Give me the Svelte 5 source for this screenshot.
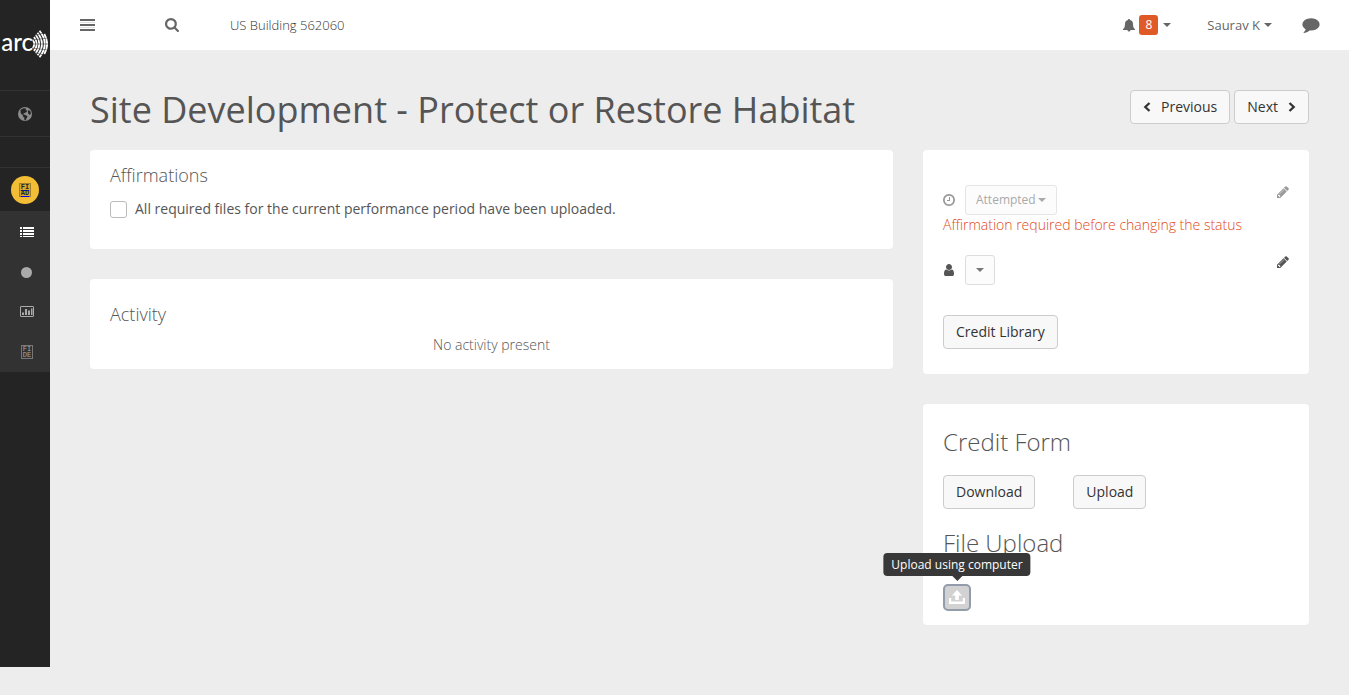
<script>
  const title = 'Site Development - Protect or Restore Habitat';
  let affirmed = $state(false);
</script>

{#snippet caret()}
  <svg class="caret" viewBox="0 0 8 4" aria-hidden="true"><path d="M0 0h8L4 4z" /></svg>
{/snippet}

{#snippet pencil()}
  <svg class="i14" viewBox="0 0 1792 1792" aria-hidden="true"><path d="M491 1536l91-91-235-235-91 91v107h128v128h107zm523-928q0-22-22-22-10 0-17 7l-542 542q-7 7-7 17 0 22 22 22 10 0 17-7l542-542q7-7 7-17zm-54-192l416 416-832 832h-416v-416zm683 96q0 53-37 90l-166 166-416-416 166-165q36-38 90-38 53 0 91 38l235 234q37 39 37 91z" /></svg>
{/snippet}

<div class="app">
  <nav class="sidebar" aria-label="Main">
    <a class="logo" href="#home" aria-label="arc">
      <span>arc</span>
      <svg viewBox="0 0 16 28" aria-hidden="true">
        <g fill="none" stroke="#fff" stroke-width="1.8">
          <path d="M0.500 9.500Q4 14 0.500 18.500" />
          <path d="M2 7Q7.500 14 2 21" />
          <path d="M3.700 4.700Q11 14 3.700 23.300" />
          <path d="M5.500 2.700Q14.400 14 5.500 25.300" />
          <path d="M7.500 0.800Q18 14 7.500 27.200" />
          <path d="M12.300 4Q18 14 12.300 24" />
        </g>
        <path d="M0 6l16-4M0 10l16-2M0 14h16M0 18l16 2M0 22l16 4" stroke="#242424" stroke-width=".5" />
      </svg>
    </a>
    <a class="item globe" href="#world" aria-label="Portfolio">
      <svg viewBox="0 0 14 14" aria-hidden="true">
        <circle cx="7" cy="7" r="7" fill="#8d8d8d" />
        <path d="M2.500 2.800L5.500 1.200 8.200 1.600 7.600 3.200 9.300 3.400 8.600 5 6.600 6 5.200 6.700 5.800 7.600 8 8.200 9.600 9.600 8.700 11 7.500 13.400 6.400 13 6.300 10.700 4.800 9.200 5.100 8 3.500 7.200 2.600 5.400zM10.500 3l1.700 1 .8 2.500-1.200 1.500-1.600-1.400-.3-2z" fill="#242424" />
      </svg>
    </a>
    <div class="blank"></div>
    <a class="item project" href="#project" aria-label="Project"><span class="badge"><span class="code"><span>FI</span><span>AD</span></span></span></a>
    <div class="sub">
      <a href="#credits" aria-label="Credits">
        <svg class="i14" viewBox="0 0 14 14" fill="#fff" aria-hidden="true"><path d="M0 2h2v2H0zM3 2h11v2H3zM0 5h2v2H0zM3 5h11v2H3zM0 8h2v2H0zM3 8h11v2H3zM0 11h2v1H0zM3 11h11v1H3z" fill="#fff" /></svg>
      </a>
      <a href="#status" aria-label="Status"><svg class="i12" viewBox="0 0 12 12" aria-hidden="true"><circle cx="5.500" cy="6" r="5.500" fill="#aaa" /></svg></a>
      <a href="#charts" aria-label="Charts">
        <svg class="i14" viewBox="0 0 14 14" aria-hidden="true"><rect x=".5" y="1.500" width="13" height="10" rx=".5" fill="none" stroke="#aaa" /><path d="M2 7.500h2V10H2zM5 4h2v6H5zM8 5.500h2V10H8zM11 3.500h1.500V10H11z" fill="#aaa" /></svg>
      </a>
      <a href="#manage" aria-label="Manage"><span class="code"><span>FI</span><span>DE</span></span></a>
    </div>
  </nav>

  <div class="page">
    <header>
      <button class="plain menu" aria-label="Toggle menu">
        <svg viewBox="0 0 15 12" aria-hidden="true"><path d="M0 0h15v2H0zM0 5h15v2H0zM0 10h15v2H0z" /><path d="M0 3h15v1H0zM0 8h15v1H0z" opacity=".2" /></svg>
      </button>
      <button class="plain search" aria-label="Search">
        <svg class="i14" viewBox="64 128 1664 1664" aria-hidden="true"><path d="M1216 832q0-185-131.500-316.500t-316.500-131.500-316.500 131.500-131.500 316.500 131.500 316.500 316.500 131.500 316.500-131.500 131.500-316.500zm512 832q0 52-38 90t-90 38q-54 0-90-38l-343-342q-179 124-399 124-143 0-273.500-55.500t-225-150-150-225-55.500-273.500 55.500-273.500 150-225 225-150 273.500-55.500 273.500 55.500 225 150 150 225 55.500 273.500q0 220-124 399l343 343q37 37 37 90z" /></svg>
      </button>
      <span class="building">US Building 562060</span>
      <button class="plain alerts" aria-label="8 notifications">
        <svg class="i12" viewBox="0 0 12 13" aria-hidden="true"><path d="M6 0c.6 0 1 .4 1 1 1.900.4 3 1.900 3 3.900 0 2.700.6 4.100 2 5.300v.8H7.500a1.500 1.500 0 0 1-3 0H0v-.8c1.400-1.200 2-2.600 2-5.300C2 2.900 3.100 1.400 5 1c0-.6.4-1 1-1z" /></svg>
        <span class="count">8</span>
        {@render caret()}
      </button>
      <button class="plain account">Saurav K {@render caret()}</button>
      <button class="plain" aria-label="Feedback">
        <svg class="chat" viewBox="0 128 1792 1664" aria-hidden="true"><path d="M1792 896q0 174-120 321.500t-326 233-450 85.500q-70 0-145-8-198 175-460 242-49 14-114 22-17 2-30.500-9t-17.500-29v-1q-3-4-.5-12t2-10 4.500-9.500l6-9 7-8.500 8-9q7-8 31-34.500t34.500-38 31-39.500 32.500-51 27-59 26-76q-157-89-247.500-220t-90.500-281q0-130 71-248.500t191-204.500 286-136.500 348-50.500q244 0 450 85.500t326 233 120 321.500z" /></svg>
      </button>
    </header>

    <main>
      <div class="titlebar">
        <h1>{title}</h1>
        <div class="pager">
          <button class="btn"><svg class="chev" viewBox="0 0 8 10" aria-hidden="true"><path d="M6.500 1L2.300 5l4.200 4" /></svg>Previous</button>
          <button class="btn">Next<svg class="chev" viewBox="0 0 8 10" aria-hidden="true"><path d="M1.500 1l4.200 4-4.200 4" /></svg></button>
        </div>
      </div>

      <div class="columns">
        <div class="stack">
          <section class="card affirm">
            <h3>Affirmations</h3>
            <label class="check">
              <input type="checkbox" bind:checked={affirmed} />
              All required files for the current performance period have been uploaded.
            </label>
          </section>
          <section class="card activity">
            <h3>Activity</h3>
            <p>No activity present</p>
          </section>
        </div>

        <div class="stack">
          <section class="card status">
            <div class="field faded">
              <svg class="i14" viewBox="0 0 1792 1792" aria-hidden="true"><path d="M1024 544v448q0 14-9 23t-23 9h-320q-14 0-23-9t-9-23v-64q0-14 9-23t23-9h224v-352q0-14 9-23t23-9h64q14 0 23 9t9 23zm416 352q0-148-73-273t-198-198-273-73-273 73-198 198-73 273 73 273 198 198 273 73 273-73 198-198 73-273zm224 0q0 209-103 385.500t-279.500 279.500-385.500 103-385.500-103-279.500-279.500-103-385.500 103-385.500 279.500-279.500 385.500-103 385.500 103 279.500 279.500 103 385.500z" /></svg>
              <span class="drop">
                <select aria-label="Status" disabled><option>Attempted</option></select>
                {@render caret()}
              </span>
              <button class="plain edit" aria-label="Edit status" disabled>{@render pencil()}</button>
            </div>
            <p class="warning">Affirmation required before changing the status</p>
            <div class="field person">
              <svg class="i14" viewBox="0 0 1792 1792" aria-hidden="true"><path d="M1536 1399q0 109-62.500 187t-150.500 78h-854q-88 0-150.500-78t-62.500-187q0-85 8.500-160.500t31.500-152 58.500-131 94-89 134.500-34.500q131 128 313 128t313-128q76 0 134.500 34.500t94 89 58.500 131 31.500 152 8.500 160.500zm-256-887q0 159-112.500 271.500t-271.500 112.500-271.500-112.500-112.500-271.500 112.500-271.500 271.500-112.500 271.500 112.500 112.500 271.500z" /></svg>
              <span class="drop empty">
                <select aria-label="Assignee"></select>
                {@render caret()}
              </span>
              <button class="plain edit" aria-label="Edit assignee">{@render pencil()}</button>
            </div>
            <button class="btn">Credit Library</button>
          </section>

          <section class="card forms">
            <h2>Credit Form</h2>
            <div class="actions">
              <button class="btn">Download</button>
              <button class="btn">Upload</button>
            </div>
            <h2>File Upload</h2>
            <div class="uploader">
              <button class="upload" aria-label="Upload file" aria-describedby="upload-tip">
                <svg viewBox="0 0 16 15" aria-hidden="true"><path d="M8 0l5 5.500H9.800V10H6.200V5.500H3zM0 8h2.200v3.500h11.600V8H16v6H0z" fill="#fff" /></svg>
              </button>
              <span class="tip" id="upload-tip" role="tooltip">Upload using computer</span>
            </div>
          </section>
        </div>
      </div>
    </main>
  </div>
</div>

<style>
  :global(body) {
    margin: 0;
    background: #ededed;
  }
  .app {
    display: flex;
    align-items: flex-start;
    color: #555;
    font: 14px/20px 'Open Sans', sans-serif;
  }
  .app :is(h1, h2, h3, p) {
    margin: 0;
  }
  svg {
    display: block;
    flex: none;
    fill: currentColor;
  }
  .i14 {
    width: 14px;
    height: 14px;
  }
  .i12 {
    width: 12px;
    height: 13px;
  }
  .caret {
    width: 8px;
    height: 4px;
  }

  .sidebar {
    display: flex;
    flex-direction: column;
    flex: none;
    width: 50px;
    min-height: calc(100vh - 28px);
    background: #242424;
  }
  .logo {
    display: flex;
    align-items: center;
    justify-content: flex-end;
    height: 88px;
    padding: 0 2px 2px 0;
    color: #fff;
    font: 500 24px/24px 'Lato', sans-serif;
    text-decoration: none;
  }
  .logo span {
    padding-bottom: 4px;
  }
  .logo svg {
    width: 16px;
    height: 28px;
    margin-left: -1px;
  }
  .item,
  .blank {
    display: flex;
    align-items: center;
    justify-content: center;
    border-top: 1px solid #323232;
  }
  .globe {
    height: 45px;
  }
  .globe svg {
    width: 14px;
    height: 14px;
  }
  .blank {
    height: 30px;
  }
  .project {
    height: 43px;
  }
  .badge {
    display: flex;
    align-items: center;
    justify-content: center;
    width: 28px;
    height: 28px;
    border-radius: 50%;
    background: #f3be35;
    color: #242424;
  }
  .code {
    display: flex;
    flex-direction: column;
    align-items: center;
    width: 10px;
    border: 1px solid #777;
    font: 700 7px/6px 'Liberation Mono', monospace;
  }
  .sub .code {
    font-weight: 400;
  }
  .badge .code {
    border-color: #a07e2a;
    background: #d9aa33;
  }
  .sub {
    padding-top: 1px;
    background: #323232;
    color: #aaa;
  }
  .sub a {
    display: flex;
    align-items: center;
    justify-content: center;
    height: 40px;
    padding-left: 4px;
    color: inherit;
    text-decoration: none;
  }

  .page {
    flex: 1;
    min-width: 0;
  }
  header {
    display: flex;
    align-items: center;
    height: 50px;
    padding: 0 29px 0 30px;
    background: #fff;
    color: #666;
    font-size: 13px;
  }
  .plain {
    display: flex;
    align-items: center;
    padding: 0;
    border: 0;
    background: none;
    color: inherit;
    font: inherit;
  }
  .menu svg {
    width: 15px;
    height: 12px;
  }
  .search {
    margin: 0 51px 0 70px;
  }
  .building {
    color: #333;
    font-weight: 300;
  }
  .alerts {
    gap: 4px;
    margin-left: auto;
  }
  .alerts svg:last-child {
    margin-left: 1px;
  }
  .count {
    padding: 0 6px;
    border-radius: 3px;
    background: #e05a28;
    color: #fff;
    font-size: 12px;
  }
  .account {
    gap: 4px;
    margin: 0 30px 0 36px;
  }
  .chat {
    width: 18px;
    height: 16px;
  }

  main {
    padding: 40px;
  }
  .titlebar {
    display: flex;
    align-items: flex-start;
    justify-content: space-between;
    margin-bottom: 20px;
  }
  h1 {
    font-size: 36px;
    font-weight: 400;
    line-height: 40px;
  }
  .pager {
    display: flex;
    gap: 4px;
  }
  .btn {
    display: inline-flex;
    align-items: center;
    gap: 10px;
    padding: 6px 12px;
    border: 1px solid #ccc;
    border-radius: 4px;
    background: #f8f8f8;
    color: #333;
    font: inherit;
  }
  .chev {
    width: 8px;
    height: 10px;
    fill: none;
    stroke: currentColor;
    stroke-width: 2.300;
  }
  .columns {
    display: grid;
    grid-template-columns: 803fr 386fr;
    align-items: start;
    gap: 30px;
  }
  .stack {
    display: grid;
    gap: 30px;
  }
  .card {
    padding: 0 20px;
    border-radius: 4px;
    background: #fff;
  }
  h2,
  h3 {
    font-weight: 300;
  }
  h2 {
    font-size: 24px;
    line-height: 36px;
  }
  h3 {
    font-size: 18px;
    line-height: 20px;
  }
  .affirm {
    padding-top: 15px;
    padding-bottom: 30px;
  }
  .check {
    display: flex;
    align-items: center;
    gap: 8px;
    margin-top: 14px;
  }
  .check input {
    appearance: none;
    width: 17px;
    height: 17px;
    margin: 0;
    border: 1px solid #bbb;
    border-radius: 3px;
    background: #fff;
  }
  .check input:checked {
    background: #555;
  }
  .activity {
    padding-top: 25px;
    padding-bottom: 14px;
  }
  .activity p {
    margin-top: 11px;
    font-weight: 300;
    text-align: center;
  }
  .status {
    padding-top: 35px;
    padding-bottom: 25px;
  }
  .field {
    display: flex;
    align-items: center;
    gap: 9px;
    margin: 0 -1px;
  }
  .faded {
    color: #999;
  }
  .person {
    margin-top: 20px;
    margin-bottom: 30px;
  }
  .drop {
    display: grid;
    align-items: center;
    color: #aaa;
  }
  .drop > :global(*) {
    grid-area: 1 / 1;
  }
  .drop select {
    appearance: none;
    height: 30px;
    padding: 0 20px 0 10px;
    border: 1px solid #e5e5e5;
    border-radius: 3px;
    background: #fcfcfc;
    color: #aaa;
    font: 12px/20px 'Open Sans', sans-serif;
    opacity: 1;
  }
  .drop svg {
    justify-self: end;
    margin-right: 11px;
    pointer-events: none;
  }
  .empty {
    color: #777;
  }
  .drop.empty select {
    width: 30px;
    padding: 0;
    border-color: #ddd;
  }
  .edit {
    align-self: flex-start;
    margin-left: auto;
  }
  .warning {
    color: #e04a18;
    font-weight: 300;
  }
  .forms {
    padding-top: 20px;
    padding-bottom: 14px;
  }
  .actions {
    display: flex;
    gap: 38px;
    margin: 15px 0 16px;
  }
  .uploader {
    position: relative;
    display: flex;
    width: 28px;
    margin-top: 23px;
  }
  .upload {
    display: flex;
    align-items: center;
    justify-content: center;
    width: 28px;
    height: 27px;
    padding: 0;
    border: 2px solid #929cab;
    border-radius: 5px;
    background: #d2d2d2;
  }
  .upload svg {
    width: 16px;
    height: 15px;
  }
  .tip {
    position: absolute;
    bottom: 35px;
    left: 50%;
    padding: 2px 8px;
    transform: translateX(-50%);
    border-radius: 4px;
    background: #383838;
    color: #fff;
    font-size: 12px;
    line-height: 19px;
    white-space: nowrap;
  }
  .tip::after {
    content: '';
    position: absolute;
    top: 100%;
    left: 50%;
    margin-left: -5px;
    border: 5px solid transparent;
    border-top-color: #383838;
    border-bottom: 0;
  }
</style>
